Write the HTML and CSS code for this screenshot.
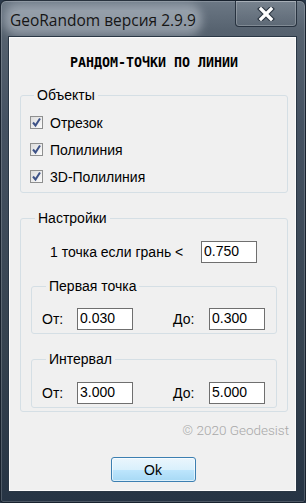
FILE: index.html
```html
<!DOCTYPE html>
<html lang="ru">
<head>
    <meta charset="UTF-8">
    <meta name="viewport" content="width=device-width, initial-scale=1.0">
    <title>GeoRandom версия 2.9.9</title>
    <link rel="stylesheet" href="styles.css">
</head>
<body>
    <div class="window">
        <div class="titlebar">
            <span class="title">GeoRandom версия 2.9.9</span>
            <button class="close" aria-label="Закрыть">
                <svg width="18" height="14" viewBox="0 0 18 14">
                    <path d="M4 2 L14 12 M14 2 L4 12" stroke="#2b3541" stroke-width="5.5" stroke-linecap="square" fill="none"/>
                    <path d="M4 2 L14 12 M14 2 L4 12" stroke="#fff" stroke-width="3.3" stroke-linecap="square" fill="none"/>
                </svg>
            </button>
        </div>

        <div class="client">
            <h1 class="heading">РАНДОМ-ТОЧКИ ПО ЛИНИИ</h1>

            <!-- Объекты -->
            <fieldset class="group objects">
                <legend>Объекты</legend>
                <label class="check"><span class="box"><svg width="11" height="11" viewBox="0 0 11 11"><path d="M2 5.5 L4.5 8.5 L9 1.5" stroke="#3d5287" stroke-width="2" fill="none"/></svg></span>Отрезок</label>
                <label class="check"><span class="box"><svg width="11" height="11" viewBox="0 0 11 11"><path d="M2 5.5 L4.5 8.5 L9 1.5" stroke="#3d5287" stroke-width="2" fill="none"/></svg></span>Полилиния</label>
                <label class="check"><span class="box"><svg width="11" height="11" viewBox="0 0 11 11"><path d="M2 5.5 L4.5 8.5 L9 1.5" stroke="#3d5287" stroke-width="2" fill="none"/></svg></span>3D-Полилиния</label>
            </fieldset>

            <!-- Настройки -->
            <fieldset class="group settings">
                <legend>Настройки</legend>
                <div class="edge-row">
                    <span class="edge-label">1 точка если грань &lt;</span>
                    <input class="field" type="text" value="0.750">
                </div>

                <fieldset class="group sub">
                    <legend>Первая точка</legend>
                    <div class="pair">
                        <span class="from">От:</span>
                        <input class="field" type="text" value="0.030">
                        <span class="to">До:</span>
                        <input class="field" type="text" value="0.300">
                    </div>
                </fieldset>

                <fieldset class="group sub interval">
                    <legend>Интервал</legend>
                    <div class="pair">
                        <span class="from">От:</span>
                        <input class="field" type="text" value="3.000">
                        <span class="to">До:</span>
                        <input class="field" type="text" value="5.000">
                    </div>
                </fieldset>
            </fieldset>

            <div class="copyright">© 2020 Geodesist</div>

            <div class="actions">
                <button class="ok">Ok</button>
            </div>
        </div>
    </div>
</body>
</html>
```

FILE: styles.css
```css
body {
    margin: 0;
    background: #2b394a;
    font-family: "Liberation Sans", Arial, sans-serif;
    font-size: 14px;
    color: #000;
}
.window {
    box-sizing: border-box;
    width: 306px;
    height: 503px;
    display: flex;
    flex-direction: column;
    padding: 0 8px 10px 7px;
    border: 1px solid #18222e;
    border-radius: 6px 6px 3px 3px;
    background: linear-gradient(to bottom, #6c7885 0, #56626f 30px, #455262 120px, #35424f 70%, #263444 100%);
    box-shadow: inset 0 0 0 1px rgba(255, 255, 255, 0.18);
}
.titlebar {
    flex: none;
    height: 35px;
    display: flex;
    align-items: flex-start;
}
.title {
    margin: 9px 0 0 2px;
    line-height: 20px;
    font-family: "Open Sans", "Liberation Sans", sans-serif;
    font-size: 15.5px;
    color: #161616;
    background: rgba(208, 216, 224, 0.45);
    box-shadow: 0 0 8px 6px rgba(208, 216, 224, 0.45);
    border-radius: 8px;
}
.close {
    margin-left: auto;
    width: 62px;
    height: 26px;
    padding: 0;
    display: flex;
    align-items: center;
    justify-content: center;
    border: 1px solid #27323f;
    border-top: none;
    border-radius: 0 0 4px 4px;
    background: linear-gradient(to bottom, rgba(255, 255, 255, 0.08), rgba(255, 255, 255, 0.02));
    box-shadow: inset 0 0 0 1px rgba(255, 255, 255, 0.22);
}
.client {
    flex: 1;
    display: flex;
    flex-direction: column;
    border: 1px solid #2a3745;
    background: #f0f0f0;
    box-shadow: inset 0 0 0 1px #fbfbfb;
}
.heading {
    margin: 18px 0 16px;
    padding-left: 3px;
    font: bold 13.3px/16px "DejaVu Sans Mono", monospace;
    text-align: center;
}
.group {
    margin: 0 8px 0 11px;
    padding: 0;
    min-width: 0;
    border: 1px solid #d5dfe5;
    border-radius: 3px;
}
.group legend {
    margin-left: 4px;
    padding: 0 3px;
    line-height: 16px;
}
.objects {
    padding: 6px 0 2px 9px;
}
.check {
    display: flex;
    align-items: center;
    gap: 7px;
    height: 27px;
}
.box {
    box-sizing: border-box;
    width: 13px;
    height: 13px;
    display: flex;
    align-items: center;
    justify-content: center;
    border: 1px solid #8e8f8f;
    background: linear-gradient(135deg, #dcdcdc, #fcfcfc);
}
.settings {
    margin-top: 17px;
    padding: 15px 10px 3px;
}
.edge-row {
    display: flex;
    align-items: center;
    height: 22px;
    padding-left: 19px;
    margin-bottom: 15px;
}
.edge-label {
    width: 151px;
}
.field {
    box-sizing: border-box;
    width: 56px;
    height: 22px;
    margin: 0;
    padding: 0 2px 3px;
    border: 1px solid #6f6f6f;
    background: #fff;
    font-family: "Liberation Sans", Arial, sans-serif;
    font-size: 14px;
    color: #000;
    outline: none;
}
.sub {
    margin: 0;
    padding: 14px 0 3px 10px;
}
.interval {
    margin-top: 17px;
    padding-top: 15px;
}
.pair {
    display: flex;
    align-items: center;
    height: 22px;
}
.from {
    width: 35px;
}
.to {
    width: 36px;
    margin-left: 40px;
}
.copyright {
    margin-top: 9px;
    padding-right: 7px;
    line-height: 18px;
    text-align: right;
    font-family: Roboto, "Liberation Sans", sans-serif;
    font-weight: 300;
    font-size: 13.5px;
    color: #a8a8a8;
}
.actions {
    display: flex;
    justify-content: center;
    margin-top: 18px;
    padding-left: 1px;
}
.ok {
    width: 85px;
    height: 25px;
    padding: 0;
    border: 1px solid #3c7fb1;
    border-radius: 3px;
    background: linear-gradient(to bottom, #eaf6fd 0, #d9f0fc 50%, #bee6fd 50%, #a7d9f5 100%);
    box-shadow: inset 0 0 0 1px rgba(255, 255, 255, 0.6);
    font-family: "Liberation Sans", Arial, sans-serif;
    font-size: 14px;
    color: #000;
}
```
